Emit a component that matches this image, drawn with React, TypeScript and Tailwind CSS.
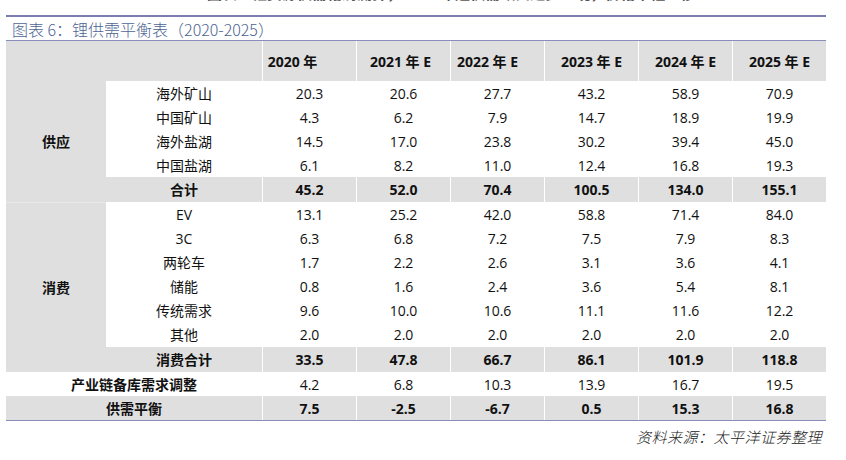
import React from "react"

const years = ["2020 年", "2021 年 E", "2022 年 E", "2023 年 E", "2024 年 E", "2025 年 E"]
const headPad = ["pr-[34px]", "pr-[6px]", "pr-[20px]", "", "", ""]

interface Row {
  label: string
  values: string[]
  h?: string
}

const supply: Row[] = [
  { label: "海外矿山", values: ["20.3", "20.6", "27.7", "43.2", "58.9", "70.9"] },
  { label: "中国矿山", values: ["4.3", "6.2", "7.9", "14.7", "18.9", "19.9"] },
  { label: "海外盐湖", values: ["14.5", "17.0", "23.8", "30.2", "39.4", "45.0"] },
  { label: "中国盐湖", values: ["6.1", "8.2", "11.0", "12.4", "16.8", "19.3"] },
]
const supplyTotal = ["45.2", "52.0", "70.4", "100.5", "134.0", "155.1"]

const demand: Row[] = [
  { label: "EV", values: ["13.1", "25.2", "42.0", "58.8", "71.4", "84.0"] },
  { label: "3C", values: ["6.3", "6.8", "7.2", "7.5", "7.9", "8.3"] },
  { label: "两轮车", values: ["1.7", "2.2", "2.6", "3.1", "3.6", "4.1"] },
  { label: "储能", values: ["0.8", "1.6", "2.4", "3.6", "5.4", "8.1"] },
  { label: "传统需求", values: ["9.6", "10.0", "10.6", "11.1", "11.6", "12.2"] },
  { label: "其他", values: ["2.0", "2.0", "2.0", "2.0", "2.0", "2.0"], h: "h-[25px]" },
]
const demandTotal = ["33.5", "47.8", "66.7", "86.1", "101.9", "118.8"]
const stock = ["4.2", "6.8", "10.3", "13.9", "16.7", "19.5"]
const balance = ["7.5", "-2.5", "-6.7", "0.5", "15.3", "16.8"]

const cjk = { fontFamily: '"Open Sans", "Noto Sans CJK SC", sans-serif' }

function ValueCells({ values, gray, bold, h }: { values: string[]; gray?: boolean; bold?: boolean; h: string }) {
  return (
    <>
      {values.map((v, i) => (
        <div
          key={i}
          className={`${h} flex items-center justify-center border-l border-white text-[14px] ${
            gray ? "bg-[#dfdfdf]" : "bg-white"
          } ${bold ? "font-bold" : ""}`}
        >
          {v}
        </div>
      ))}
    </>
  )
}

export default function App() {
  return (
    <div className="w-[846px] h-[460px] bg-white text-[#111] overflow-hidden" style={cjk}>
      {/* tail of the previous line, cut off by the crop */}
      <div className="h-[3px] overflow-hidden pl-[207px]">
        <div className="-mt-[15px] leading-[16px] text-[15px] font-bold text-[#555] whitespace-nowrap">
          图表：锂资源供需格局测算，2021 年起供需缺口逐步显现，价格中枢上移
        </div>
      </div>

      <div className="mx-[6px] mt-[12px] w-[820px]">
        <div className="h-[2px] bg-[#7b7db0]" />
        <div
          className="h-[23px] flex items-center pl-[6px] text-[16px] font-light text-[#4d6592]"
          style={{ fontFamily: '"Noto Sans CJK SC", sans-serif' }}
        >
          图表 6：锂供需平衡表（2020-2025）
        </div>
        <div className="h-px bg-[#8a8cbb]" />

        <div className="grid grid-cols-[100px_156px_repeat(6,94px)]">
          {/* header */}
          <div className="col-span-2 h-[40px] bg-[#dfdfdf]" />
          {years.map((y, i) => (
            <div
              key={y}
              className={`h-[40px] flex items-center justify-center border-l border-white bg-[#dfdfdf] text-[14px] font-bold ${headPad[i]}`}
            >
              {y}
            </div>
          ))}

          {/* supply */}
          <div className="row-span-5 bg-[#dfdfdf] flex items-center justify-center text-[14px] font-bold">供应</div>
          {supply.map((r) => (
            <React.Fragment key={r.label}>
              <div className="h-[24px] flex items-center justify-center text-[14px]">{r.label}</div>
              <ValueCells values={r.values} h="h-[24px]" />
            </React.Fragment>
          ))}
          <div className="h-[25px] flex items-center justify-center bg-[#dfdfdf] text-[14px] font-bold">合计</div>
          <ValueCells values={supplyTotal} gray bold h="h-[25px]" />

          {/* demand */}
          <div className="row-span-7 bg-[#dfdfdf] border-t border-[#e9e9e9] flex items-center justify-center text-[14px] font-bold">
            消费
          </div>
          {demand.map((r) => (
            <React.Fragment key={r.label}>
              <div className={`${r.h ?? "h-[24px]"} flex items-center justify-center text-[14px]`}>{r.label}</div>
              <ValueCells values={r.values} h={r.h ?? "h-[24px]"} />
            </React.Fragment>
          ))}
          <div className="h-[25px] flex items-center justify-center bg-[#dfdfdf] text-[14px] font-bold">消费合计</div>
          <ValueCells values={demandTotal} gray bold h="h-[25px]" />

          {/* bottom rows */}
          <div className="col-span-2 h-[24px] flex items-center justify-center text-[14px] font-bold">
            产业链备库需求调整
          </div>
          <ValueCells values={stock} h="h-[24px]" />
          <div className="col-span-2 h-[24px] flex items-center justify-center bg-[#dfdfdf] text-[14px] font-bold">
            供需平衡
          </div>
          <ValueCells values={balance} gray bold h="h-[24px]" />
        </div>
        <div className="h-px bg-[#8a8cbb]" />

        <div
          className="mt-[5px] pr-[4px] text-right text-[15px] italic font-light tracking-[0.5px] text-[#222]"
          style={{ fontFamily: '"Noto Sans CJK SC", sans-serif' }}
        >
          资料来源：太平洋证券整理
        </div>
      </div>
    </div>
  )
}
